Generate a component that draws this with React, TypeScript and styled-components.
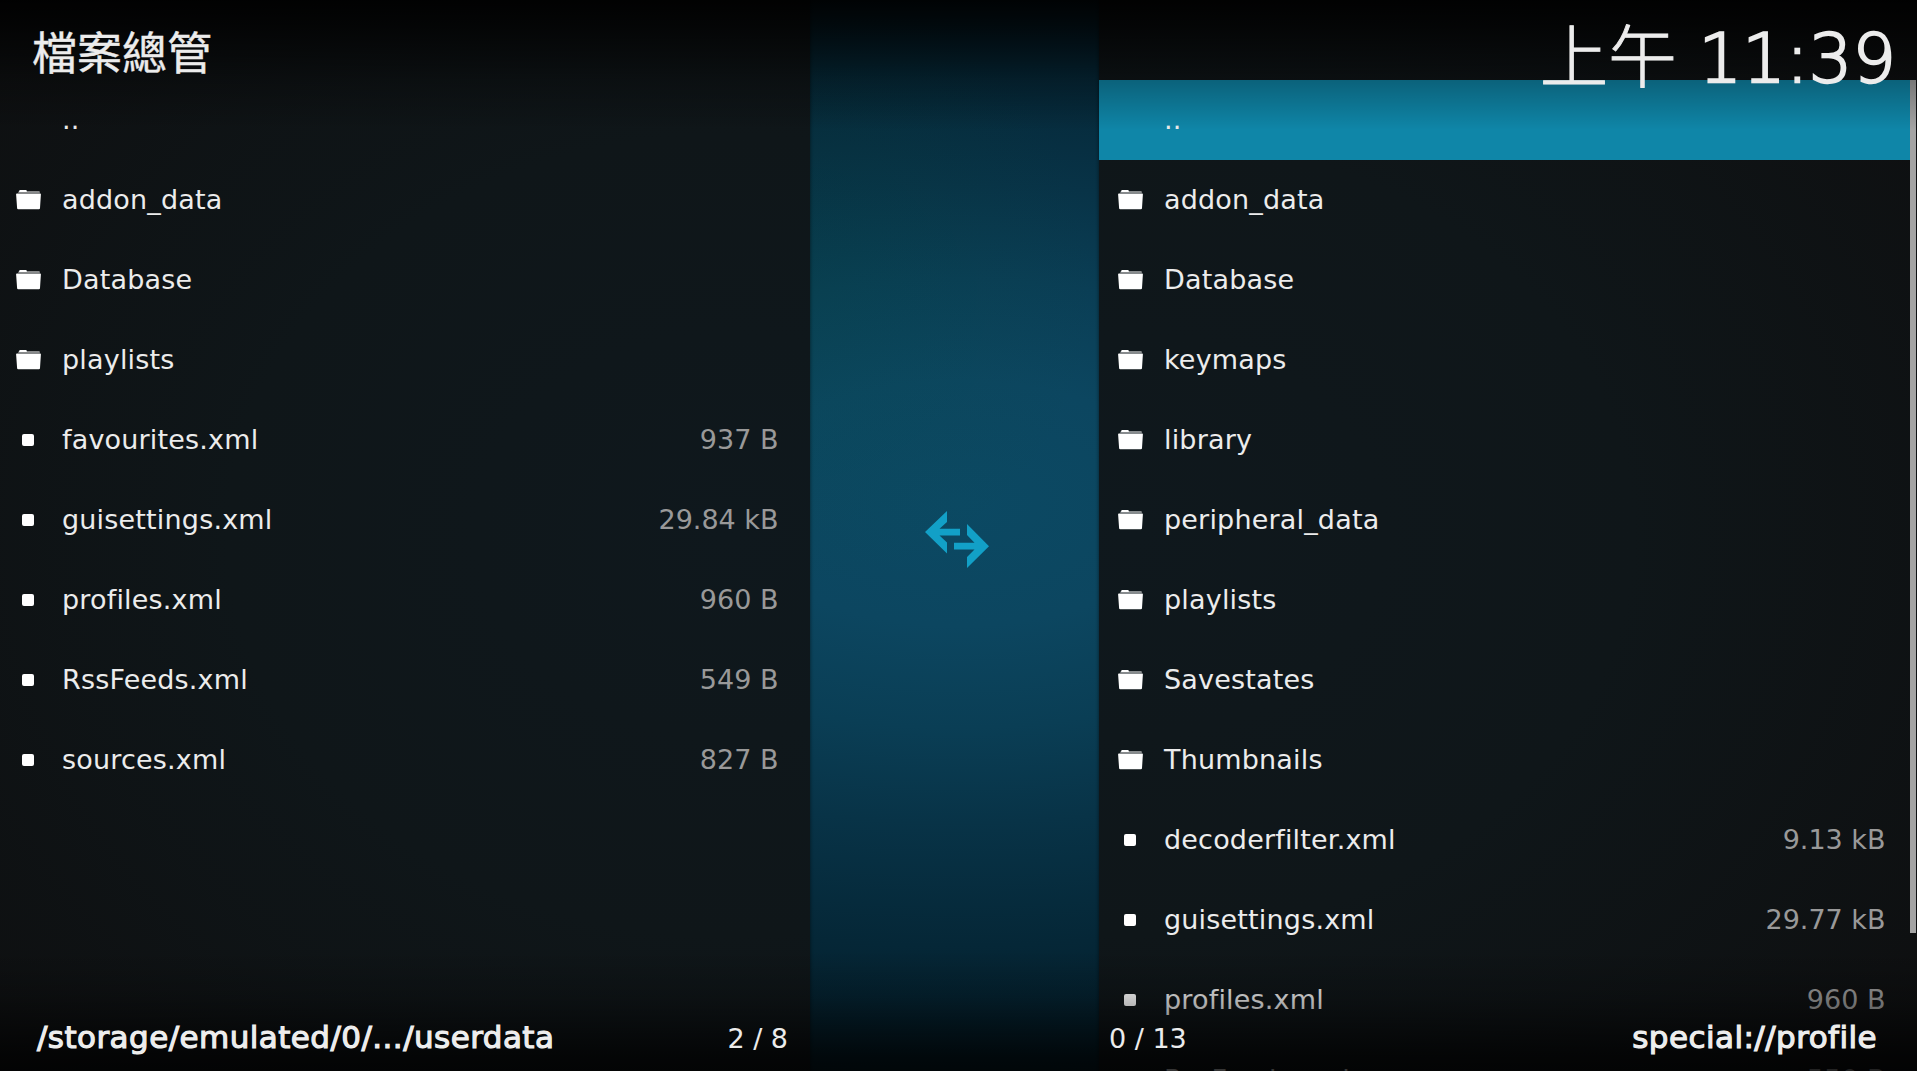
import React from "react";
import styled, { createGlobalStyle } from "styled-components";

const GlobalStyle = createGlobalStyle`
  body { margin: 0; background: #000; overflow: hidden; }
`;

const Screen = styled.div`
  position: relative;
  display: grid;
  grid-template-columns: 809.5px 289.5px 1fr;
  width: 100vw;
  height: 100vh;
  overflow: hidden;
  color: #ececec;
  font-family: "DejaVu Sans", "Noto Sans CJK TC", sans-serif;
  font-size: 27px;
  font-variant-ligatures: none;
  background:
    radial-gradient(circle 300px at 800px 290px, rgba(0, 80, 50, 0.12), rgba(0, 80, 50, 0)),
    radial-gradient(ellipse 1300px 680px at 50% 47%, #0b4963 0%, #0c4660 18%, #0a3e55 33%, #083347 47%, #052737 65%, #03141c 100%);
`;

const Panel = styled.section<{ $side: "left" | "right" }>`
  display: flex;
  height: 100vh;
  overflow: hidden;
  background: ${(p) =>
    p.$side === "left"
      ? "radial-gradient(ellipse 1000px 800px at 90% 50%, #0f181d 0%, #0f1619 50%, #0e0f10 100%)"
      : "radial-gradient(ellipse 1000px 800px at 4% 50%, #0f181d 0%, #0f1619 50%, #0e0f10 100%)"};
`;

const List = styled.ul`
  flex: 1;
  margin: 0;
  padding: 80px 0 0;
  list-style: none;
`;

const Row = styled.li<{ $selected?: boolean; $inset: number; $end: number }>`
  display: flex;
  align-items: center;
  box-sizing: border-box;
  height: 80px;
  padding: 0 ${(p) => p.$end}px 0 ${(p) => p.$inset}px;
  background: ${(p) => (p.$selected ? "#0f86a8" : "transparent")};
`;

const IconSlot = styled.span`
  display: flex;
  align-items: center;
  justify-content: center;
  width: 25px;
  margin-right: 21px;
`;

const FileMark = styled.span`
  width: 12px;
  height: 12px;
  margin-right: 1px;
  border-radius: 2px;
  background: #fff;
`;

const Name = styled.span`
  flex: 1;
  line-height: 80px;
  letter-spacing: 0.18px;
`;

const Size = styled.span`
  line-height: 80px;
  color: #999;
`;

const ScrollTrack = styled.div`
  width: 7px;
  padding-top: 80px;
`;

const ScrollThumb = styled.div`
  width: 6px;
  height: 853px;
  background: #a4a4a4;
`;

const Center = styled.div`
  display: flex;
  align-items: center;
  justify-content: center;
  padding: 7px 0 0 5px;
  box-shadow: inset 3px 0 3px -2px rgba(0, 0, 0, 0.35), inset -3px 0 3px -2px rgba(0, 0, 0, 0.35);
`;

const Header = styled.header`
  position: absolute;
  inset: 0 0 auto 0;
  display: flex;
  justify-content: space-between;
  box-sizing: border-box;
  height: 130px;
  padding: 0 21px 0 32px;
  background: linear-gradient(to bottom, rgba(0, 0, 0, 0.92) 0, rgba(0, 0, 0, 0.75) 25px, rgba(0, 0, 0, 0.27) 80px, rgba(0, 0, 0, 0) 130px);
`;

const Title = styled.h1`
  margin: 0;
  font-size: 45px;
  font-weight: 400;
  line-height: 110px;
  -webkit-text-stroke: 0.4px #ececec;
`;

const Clock = styled.time`
  font-size: 68.5px;
  font-weight: 300;
  line-height: 117px;
  white-space: pre;
  -webkit-text-stroke: 0.9px #ececec;
`;

const Digits = styled.span`
  font-weight: 200;
  -webkit-text-stroke: 2.3px #ececec;
`;

const Footer = styled.footer`
  position: absolute;
  inset: auto 0 0 0;
  display: grid;
  grid-template-columns: 788px 321px 1fr;
  align-items: end;
  box-sizing: border-box;
  height: 120px;
  background: linear-gradient(to bottom, rgba(0, 0, 0, 0) 0, rgba(0, 0, 0, 0.2) 45px, rgba(0, 0, 0, 0.72) 105px, rgba(0, 0, 0, 0.78) 120px);
`;

const FooterSide = styled.div<{ $column: number; $start: number; $end: number }>`
  grid-column: ${(p) => p.$column};
  display: flex;
  justify-content: space-between;
  align-items: baseline;
  padding: 0 ${(p) => p.$end}px 0 ${(p) => p.$start}px;
  line-height: 64px;
`;

const Path = styled.span`
  font-size: 31px;
  letter-spacing: 0.43px;
  -webkit-text-stroke: 1.1px #f0f0f0;
`;

const Folder = () => (
  <svg width="25" height="20" viewBox="0 0 25 20" fill="#fff">
    <path d="M3.2 1q0-1 1-1h5.6q1 0 1 1v.6h12.4q.7 0 .7.9H2.2q0-.9 1-.9z" />
    <path d="M.9 3.4h23.2q.9 0 .8.9l-.9 13.9q-.1 1-1.1 1H2.2q-1 0-1.1-1L.1 4.3q0-.9.8-.9z" />
  </svg>
);

const SwapArrows = () => (
  <svg width="64" height="57" viewBox="0 0 64 57" fill="#12a0c7">
    <path d="M0 21 22 0V11L14.5 17.7H35V24.5H14.5L22 31.5V42.5z" />
    <path d="M64 35.2 42 57V46L49.5 38.5H29V31.7H49.5L42 24V13z" />
  </svg>
);

type Entry = { name: string; kind: "up" | "folder" | "file"; size?: string };

const left: Entry[] = [
  { name: "..", kind: "up" },
  { name: "addon_data", kind: "folder" },
  { name: "Database", kind: "folder" },
  { name: "playlists", kind: "folder" },
  { name: "favourites.xml", kind: "file", size: "937 B" },
  { name: "guisettings.xml", kind: "file", size: "29.84 kB" },
  { name: "profiles.xml", kind: "file", size: "960 B" },
  { name: "RssFeeds.xml", kind: "file", size: "549 B" },
  { name: "sources.xml", kind: "file", size: "827 B" },
];

const right: Entry[] = [
  { name: "..", kind: "up" },
  { name: "addon_data", kind: "folder" },
  { name: "Database", kind: "folder" },
  { name: "keymaps", kind: "folder" },
  { name: "library", kind: "folder" },
  { name: "peripheral_data", kind: "folder" },
  { name: "playlists", kind: "folder" },
  { name: "Savestates", kind: "folder" },
  { name: "Thumbnails", kind: "folder" },
  { name: "decoderfilter.xml", kind: "file", size: "9.13 kB" },
  { name: "guisettings.xml", kind: "file", size: "29.77 kB" },
  { name: "profiles.xml", kind: "file", size: "960 B" },
  { name: "RssFeeds.xml", kind: "file", size: "550 B" },
];

const FileRows = ({ items, selected, inset, end }: { items: Entry[]; selected?: number; inset: number; end: number }) => (
  <List>
    {items.map((item, i) => (
      <Row key={item.name} $selected={i === selected} $inset={inset} $end={end}>
        <IconSlot>
          {item.kind === "folder" && <Folder />}
          {item.kind === "file" && <FileMark />}
        </IconSlot>
        <Name>{item.name}</Name>
        {item.size && <Size>{item.size}</Size>}
      </Row>
    ))}
  </List>
);

export default function App() {
  return (
    <>
      <GlobalStyle />
      <Screen>
        <Panel $side="left">
          <FileRows items={left} inset={16} end={31} />
        </Panel>
        <Center>
          <SwapArrows />
        </Center>
        <Panel $side="right">
          <FileRows items={right} selected={0} inset={19} end={24.5} />
          <ScrollTrack>
            <ScrollThumb />
          </ScrollTrack>
        </Panel>
        <Header>
          <Title>檔案總管</Title>
          <Clock>
            上午<Digits> 11:39</Digits>
          </Clock>
        </Header>
        <Footer>
          <FooterSide $column={1} $start={37} $end={0}>
            <Path>/storage/emulated/0/.../userdata</Path>
            <span>2 / 8</span>
          </FooterSide>
          <FooterSide $column={3} $start={0} $end={40}>
            <span>0 / 13</span>
            <Path>special://profile</Path>
          </FooterSide>
        </Footer>
      </Screen>
    </>
  );
}
